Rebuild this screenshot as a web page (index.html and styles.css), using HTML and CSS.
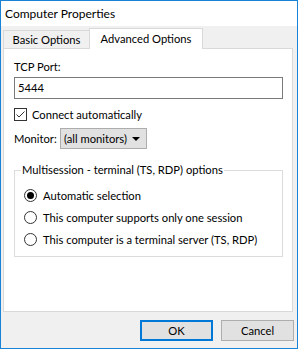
FILE: index.html
```html
<!DOCTYPE html>
<html lang="en">

<head>
    <meta charset="UTF-8">
    <meta name="viewport" content="width=device-width, initial-scale=1.0">
    <title>Computer Properties</title>
    <link rel="stylesheet" href="styles.css">
</head>

<body>
    <div class="window">
        <div class="titlebar">Computer Properties</div>

        <div class="tabs">
            <div class="tab">Basic Options</div>
            <div class="tab active">Advanced Options</div>
        </div>

        <div class="panel">
            <div class="label">TCP Port:</div>
            <div class="textbox">5444</div>

            <div class="check-row">
                <span class="checkbox">
                    <svg width="11" height="11" viewBox="0 0 11 11">
                        <polyline points="1.5,5.5 4,8 9.5,2.5" fill="none" stroke="#333" stroke-width="1" />
                    </svg>
                </span>
                <span>Connect automatically</span>
            </div>

            <div class="monitor-row">
                <span class="monitor-label">Monitor:</span>
                <div class="combo">
                    <span>(all monitors)</span>
                    <span class="arrow"></span>
                </div>
            </div>

            <fieldset class="group">
                <legend>Multisession - terminal (TS, RDP) options</legend>
                <div class="radio-row"><span class="radio checked"></span>Automatic selection</div>
                <div class="radio-row"><span class="radio"></span>This computer supports only one session</div>
                <div class="radio-row"><span class="radio"></span>This computer is a terminal server (TS, RDP)</div>
            </fieldset>
        </div>

        <div class="footer">
            <button type="button" class="btn default">OK</button>
            <button type="button" class="btn">Cancel</button>
        </div>
    </div>
</body>

</html>
```

FILE: styles.css
```css
body {
    margin: 0;
    font-family: "Segoe UI", Lato, sans-serif;
    font-size: 11.2px;
    color: #000;
    white-space: nowrap;
}

.window {
    width: 298px;
    height: 349px;
    box-sizing: border-box;
    border: 1px solid #1883d7;
    background-color: #f0f0f0;
    display: flex;
    flex-direction: column;
}

.titlebar {
    height: 25px;
    line-height: 25px;
    padding-left: 4px;
    font-size: 12px;
    background-color: #fff;
}

/* tab strip */
.tabs {
    display: flex;
    align-items: flex-end;
    margin-top: 2px;
    padding-left: 2px;
}

.tab {
    box-sizing: border-box;
    height: 18px;
    line-height: 18px;
    width: 87px;
    text-align: center;
    border: 1px solid #d9d9d9;
    border-bottom: none;
    background-color: #f0f0f0;
}

.tab.active {
    position: relative;
    z-index: 1;
    width: 114px;
    height: 21px;
    margin-left: -1px;
    margin-bottom: -1px;
    padding-top: 2px;
    line-height: 16px;
    background-color: #fff;
}

.panel {
    width: 290px;
    height: 264px;
    box-sizing: border-box;
    margin-left: 2px;
    padding: 10px 9px 0 10px;
    border: 1px solid #d9d9d9;
    background-color: #fff;
}

.label {
    line-height: 16px;
}

.textbox {
    box-sizing: border-box;
    height: 22px;
    margin-top: 2px;
    padding-left: 3px;
    line-height: 20px;
    border: 1px solid #7a7a7a;
}

.check-row {
    display: flex;
    align-items: center;
    height: 16px;
    margin-top: 7px;
}

.checkbox {
    display: flex;
    width: 13px;
    height: 13px;
    box-sizing: border-box;
    margin-right: 5px;
    border: 1px solid #333;
}

.monitor-row {
    display: flex;
    align-items: center;
    margin-top: 6px;
}

.monitor-label {
    width: 46px;
}

.combo {
    display: flex;
    align-items: center;
    justify-content: space-between;
    box-sizing: border-box;
    width: 87px;
    height: 21px;
    padding: 0 6px 0 3px;
    border: 1px solid #adadad;
    background-color: #e1e1e1;
}

.arrow {
    width: 0;
    height: 0;
    border-left: 4px solid transparent;
    border-right: 4px solid transparent;
    border-top: 4px solid #000;
}

.group {
    margin: 13px 0 0 0;
    padding: 6px 0 6px 9px;
    border: 1px solid #dcdcdc;
    min-width: 0;
}

.group legend {
    margin-left: -3px;
    padding: 0 1px;
    line-height: 16px;
}

.radio-row {
    display: flex;
    align-items: center;
    height: 22px;
}

.radio {
    display: flex;
    align-items: center;
    justify-content: center;
    width: 13px;
    height: 13px;
    box-sizing: border-box;
    margin-right: 6px;
    border: 1px solid #333;
    border-radius: 50%;
}

.radio.checked::after {
    content: "";
    width: 7px;
    height: 7px;
    border-radius: 50%;
    background-color: #000;
}

.footer {
    display: flex;
    justify-content: flex-end;
    gap: 8px;
    padding: 8px 3px 0 0;
}

.btn {
    box-sizing: border-box;
    width: 73px;
    height: 21px;
    padding: 0;
    font: inherit;
    color: #000;
    border: 1px solid #adadad;
    background-color: #e1e1e1;
}

.btn.default {
    border: 2px solid #0078d7;
}
```
